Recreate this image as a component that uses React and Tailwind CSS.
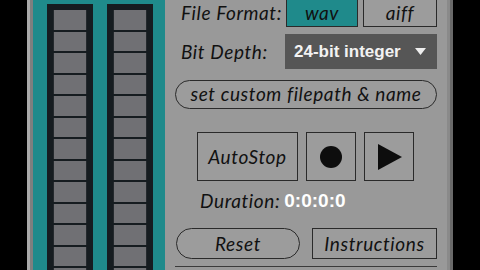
import React from "react";

const segs = Array.from({ length: 13 });

function Meter() {
  return (
    <div className="w-[46px] h-[290px] bg-[#161c20] p-[6px] pt-[6px] flex flex-col gap-[2px]">
      {segs.map((_, i) => (
        <div key={i} className="h-[19.5px] shrink-0 bg-[#707074] border-x border-[#24292d]" />
      ))}
    </div>
  );
}

export default function App() {
  const lbl = "font-['Lato',sans-serif] italic text-[#111111] text-[19px] tracking-[0.6px] leading-none";
  return (
    <div className="w-[480px] h-[270px] bg-black flex overflow-hidden">
      <div className="w-[27px] shrink-0" />
      <div className="w-[3px] shrink-0 bg-[#a9a9a9]" />
      <div className="w-[3px] shrink-0 bg-[#7f7f7f]" />
      <div className="w-[132px] shrink-0 bg-[#1f8a8b] flex gap-[14px] pl-[14px] pt-[4px]">
        <Meter />
        <Meter />
      </div>
      <div className="w-[282px] shrink-0 bg-[#999999] flex flex-col pl-[10px] pr-[10px]">
        <div className="flex items-start h-[27px] -mt-[2px]">
          <div className={`${lbl} pl-[6px] pt-[5px] w-[111px] whitespace-nowrap`}>File Format:</div>
          <div className="w-[72px] h-[29px] bg-[#1f8a8b] border border-[#2a2a2a] flex items-center justify-center">
            <span className={lbl}>wav</span>
          </div>
          <div className="ml-[5px] w-[74px] h-[29px] bg-[#9c9c9c] border border-[#2a2a2a] flex items-center justify-center">
            <span className={lbl}>aiff</span>
          </div>
        </div>
        <div className="flex items-center mt-[9px] h-[35px]">
          <div className={`${lbl} pl-[6px] w-[110px] whitespace-nowrap`}>Bit Depth:</div>
          <div className="w-[152px] h-[35px] bg-[#565656] flex items-center pl-[9px] pr-[11px] justify-between">
            <span className="font-['Liberation_Sans',sans-serif] font-bold text-[17px] text-[#f2f2f2] whitespace-nowrap">24-bit integer</span>
            <svg width="11" height="7" viewBox="0 0 11 7"><polygon points="0,0 11,0 5.5,7" fill="#eeeeee" /></svg>
          </div>
        </div>
        <div className="mt-[11px] h-[29px] w-[262px] rounded-full border border-[#2a2a2a] bg-[#9c9c9c] flex items-center justify-center">
          <span className={`${lbl} -mt-[2px] whitespace-nowrap`}>set custom filepath &amp; name</span>
        </div>
        <div className="flex mt-[23px] pl-[22px] gap-[8px] h-[49px]">
          <div className="w-[101px] h-[49px] border border-[#2a2a2a] bg-[#9c9c9c] flex items-center justify-center">
            <span className={lbl}>AutoStop</span>
          </div>
          <div className="w-[50px] h-[49px] border border-[#2a2a2a] bg-[#9c9c9c] flex items-center justify-center">
            <div className="w-[22px] h-[22px] rounded-full bg-[#0d0d0d]" />
          </div>
          <div className="w-[50px] h-[49px] border border-[#2a2a2a] bg-[#9c9c9c] flex items-center justify-center">
            <svg width="24" height="26" viewBox="0 0 24 26" className="ml-[2px]"><polygon points="0,0 24,13 0,26" fill="#0d0d0d" /></svg>
          </div>
        </div>
        <div className="flex items-center mt-[9px] pl-[25px] h-[20px]">
          <span className={lbl}>Duration:</span>
          <span className="ml-[4px] font-['Liberation_Sans',sans-serif] font-bold text-[19px] leading-none text-white">0:0:0:0</span>
        </div>
        <div className="flex mt-[18px] h-[31px] gap-[12px] pl-[1px]">
          <div className="w-[124px] h-[31px] rounded-full border border-[#2a2a2a] bg-[#9c9c9c] flex items-center justify-center">
            <span className={lbl}>Reset</span>
          </div>
          <div className="w-[125px] h-[31px] border border-[#2a2a2a] bg-[#9c9c9c] flex items-center justify-center">
            <span className={lbl}>Instructions</span>
          </div>
        </div>
        <div className="mt-[7px] h-[1px] bg-[#3a3a3a]" />
      </div>
      <div className="w-[3px] shrink-0 bg-[#8a8a8a]" />
      <div className="w-[3px] shrink-0 bg-[#6a6a6a]" />
    </div>
  );
}
